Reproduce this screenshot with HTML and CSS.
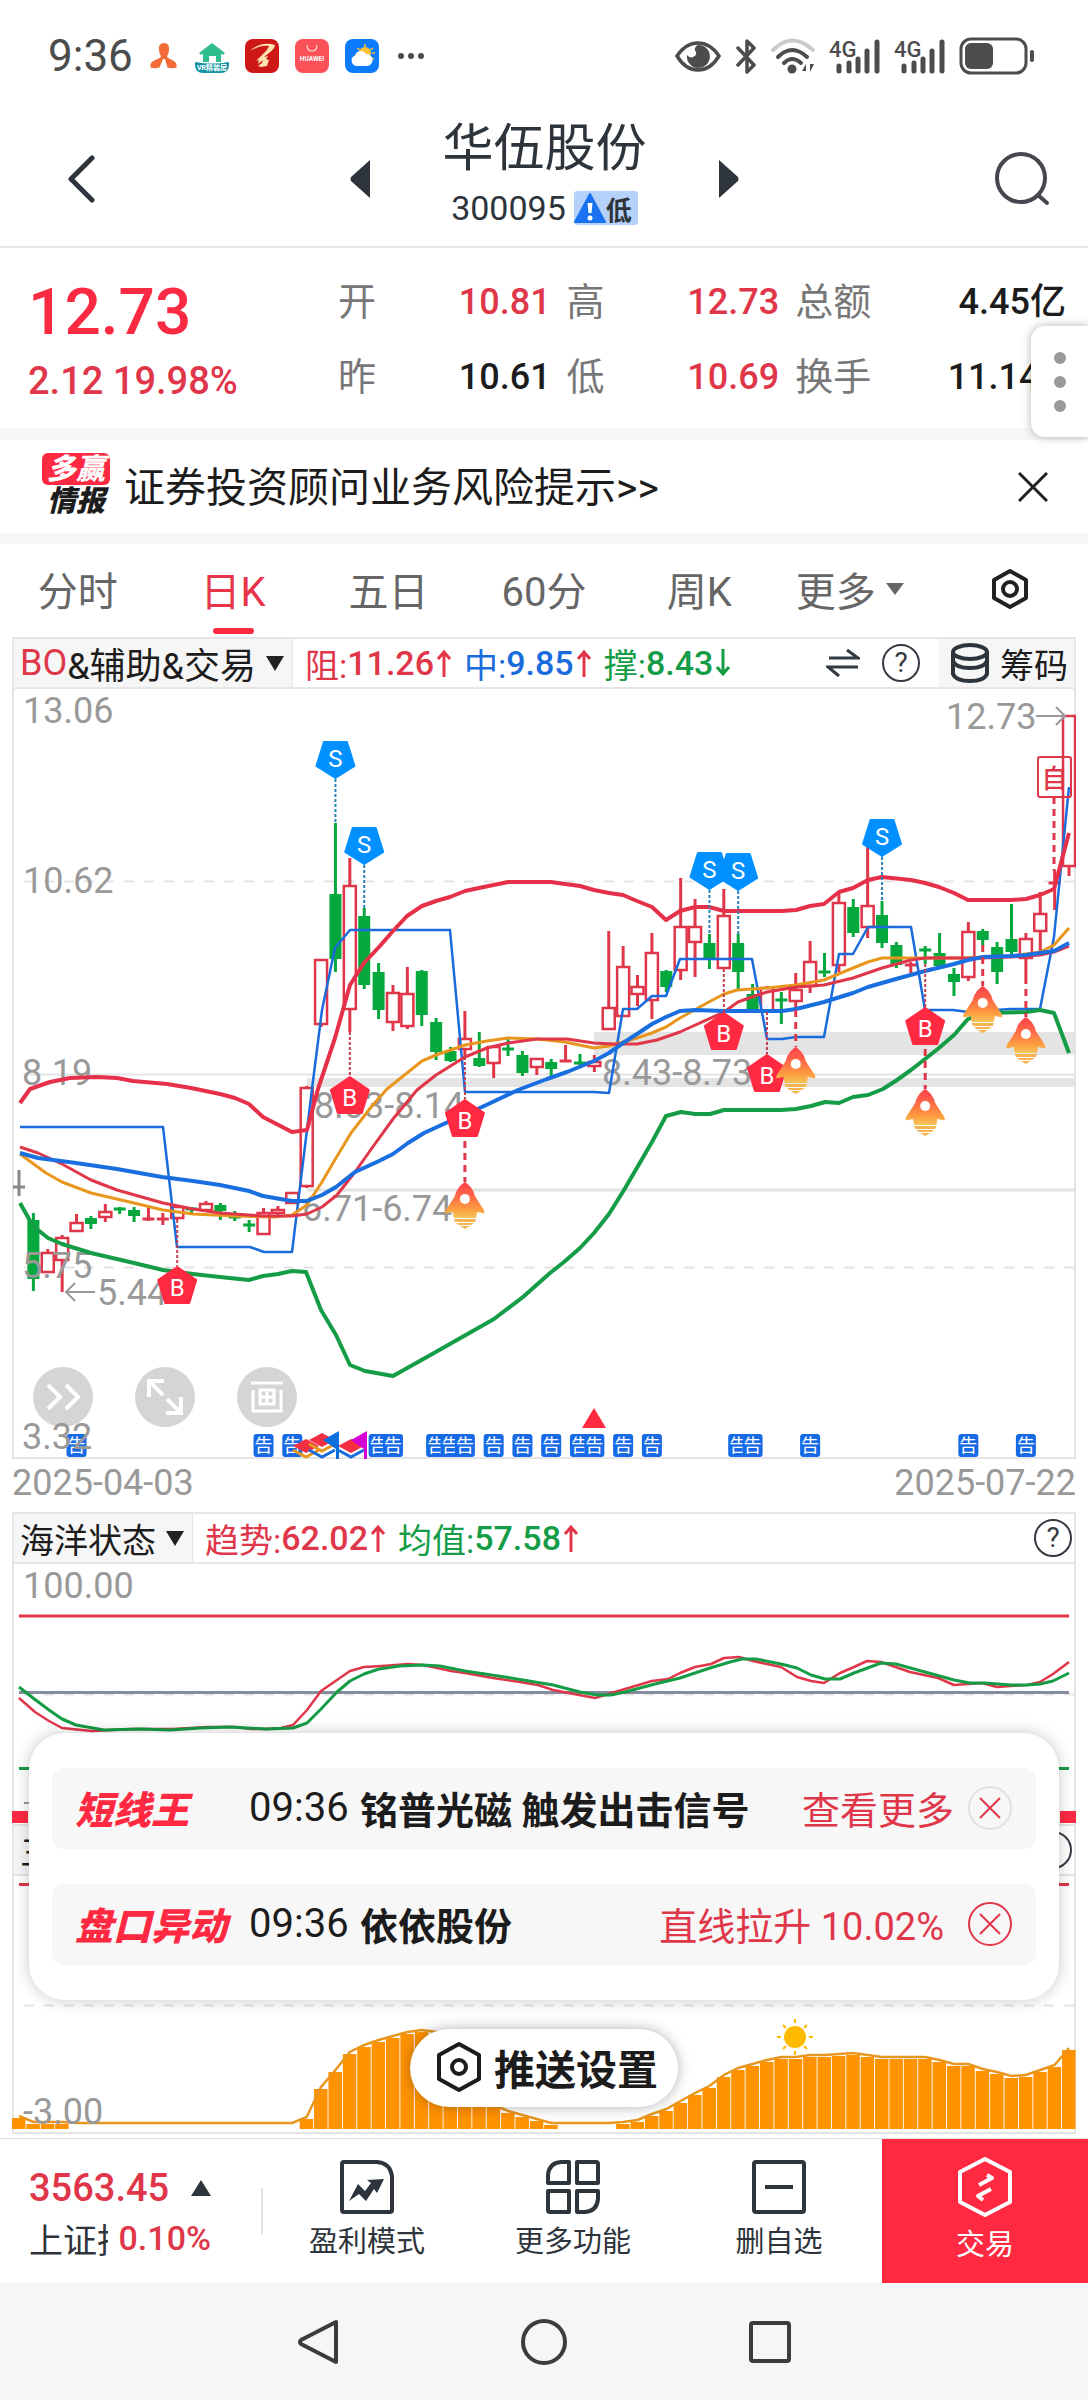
FILE: index.html
```html
<!DOCTYPE html>
<html lang="zh-CN">

<head>
    <meta charset="UTF-8">
    <meta name="viewport" content="width=device-width, initial-scale=1.0">
    <title>华伍股份 300095</title>
    <link rel="stylesheet" href="styles.css">
</head>

<body>
    <!-- phone status bar -->
    <div class="status-bar">
        <div class="status-left">
            <span class="clock">9:36</span>
            <svg width="30" height="34" viewBox="0 0 30 34">
                <path fill="#f26a35" d="M15 4c4 0 5.500 3 5 6.500c0 3-1 4.500-2 7c1 3 8 3 9.500 8v3c-3 1-6 1-9 0L16 20h-2l-3.500 8.500c-3 1-6 1-9 0v-3C3 20.500 11 20.500 12 17.500c-1-2.500-2-4-2-7C9.500 7 11 4 15 4z" />
            </svg>
            <svg width="34" height="34" viewBox="0 0 34 34">
                <path fill="#2ebd8e" d="M17 4L30 14l-2 2-2-1.500V23h-5v-6h-7v6H8v-8.500L6 16l-2-2z" />
                <path fill="#1593a5" d="M0 23q17 3 34 0v4q-1 7-8 7H8q-7 0-8-7z" />
                <text x="17" y="31" text-anchor="middle" font-size="7" font-weight="700" fill="#fff">VR精装房</text>
            </svg>
            <svg width="34" height="34" viewBox="0 0 34 34">
                <rect width="34" height="34" rx="8" fill="#cd1815" />
                <path fill="#ffe3b0" d="M5 12C12 5 22 3 30 6c0 4-6 8-11 12l4-1-2 3 3 1-2 6-6 1-3-1 4-3 1-3-5 4 1-4-3 1 7-7c3-3 5-5 6-8-6-1-12 1-19 5z" />
            </svg>
            <svg width="34" height="34" viewBox="0 0 34 34">
                <rect width="34" height="34" rx="8" fill="#fb5159" />
                <path d="M12 6q0 6 5 6t5-6" fill="none" stroke="#ffd9da" stroke-width="1.200" />
                <text x="17" y="22" text-anchor="middle" font-size="6.500" font-weight="700" fill="#fff">HUAWEI</text>
            </svg>
            <svg width="34" height="34" viewBox="0 0 34 34">
                <rect width="34" height="34" rx="8" fill="#0b7bff" />
                <g stroke="#ffc83a" stroke-width="1.500">
                    <path d="M20 5v3M12 9l3 2M28 9l-3 2M27 14h3M26 19l3 1" />
                </g>
                <circle cx="20" cy="14" r="6" fill="#ffc530" />
                <path fill="#fff" d="M11 27a5.500 5.500 0 0 1-1-10.500a6 6 0 0 1 11-1.500a6 6 0 1 1 1 12z" />
            </svg>
            <svg width="30" height="34" viewBox="0 0 30 34" fill="#4c4c4c">
                <circle cx="6" cy="17" r="3" /><circle cx="16" cy="17" r="3" /><circle cx="26" cy="17" r="3" />
            </svg>
        </div>
        <div class="status-right">
            <svg width="48" height="34" viewBox="0 0 48 34">
                <path d="M3 17C9 8 16 4 24 4s15 4 21 13C39 27 32 31 24 31S9 27 3 17z" fill="none" stroke="#4c4c4c" stroke-width="3.500" />
                <path d="M24 6a11.500 11.500 0 1 1-11 10q3 4 7 1.500t1-6Q20 8 24 6z" fill="#4c4c4c" />
            </svg>
            <svg width="22" height="36" viewBox="0 0 22 36" fill="none" stroke="#4c4c4c" stroke-width="3.500" stroke-linecap="round" stroke-linejoin="round">
                <path d="M3 10l16 17-7 7V3l7 7L3 27" />
            </svg>
            <svg width="46" height="36" viewBox="0 0 46 36" fill="none" stroke="#4c4c4c" stroke-width="4" stroke-linecap="round">
                <path d="M3 12Q22-7 43 12" stroke="#cbcbcb" />
                <path d="M8 19Q22 5 37 19M14 25Q22 17 31 25" />
                <circle cx="22" cy="31" r="4.500" fill="#4c4c4c" stroke="none" />
                <path d="M36 26v7h-4zM40 26h4l-4 8z" fill="#4c4c4c" stroke="none" />
            </svg>
            <svg width="52" height="36" viewBox="0 0 52 36">
                <text x="0" y="19" font-size="22" font-weight="500" fill="#4c4c4c">4G</text>
                <path d="M10 28v5M20 25v8M29 21v12M38 13v20M48 4v29" stroke="#4c4c4c" stroke-width="5" stroke-linecap="round" />
            </svg>
            <svg width="52" height="36" viewBox="0 0 52 36">
                <text x="0" y="19" font-size="22" font-weight="500" fill="#4c4c4c">4G</text>
                <path d="M10 28v5M20 25v8M29 21v12M38 13v20M48 4v29" stroke="#4c4c4c" stroke-width="5" stroke-linecap="round" />
            </svg>
            <svg width="75" height="38" viewBox="0 0 75 38">
                <rect x="2" y="2" width="65" height="34" rx="10" fill="none" stroke="#4c4c4c" stroke-width="3" />
                <rect x="6" y="6" width="28" height="26" rx="6" fill="#4c4c4c" />
                <rect x="71" y="13" width="4" height="12" rx="2" fill="#4c4c4c" />
            </svg>
        </div>
    </div>

    <header class="stock-header">
        <button type="button" class="icon-btn" aria-label="返回">
            <svg width="27" height="50" viewBox="0 0 27 50">
                <path d="M24 4L3 25l21 21" fill="none" stroke="#2e343b" stroke-width="5" stroke-linecap="round" stroke-linejoin="round" />
            </svg>
        </button>
        <div class="stock-switch">
            <button type="button" class="icon-btn" aria-label="上一只">
                <svg width="20" height="38" viewBox="0 0 20 38"><path d="M20 0v38L1 21q-1-2 0-4z" fill="#2e343b" /></svg>
            </button>
            <div class="stock-name">
                <h1>华伍股份</h1>
                <p>300095
                    <span class="risk">
                        <svg width="32" height="32" viewBox="0 0 32 32">
                            <path d="M16 2L31 30H1z" fill="#1b72f0" stroke="#1b72f0" stroke-width="2" stroke-linejoin="round" />
                            <path d="M13.500 11h5l-1 10h-3z" fill="#fff" /><circle cx="16" cy="26" r="2.500" fill="#fff" />
                        </svg>低</span>
                </p>
            </div>
            <button type="button" class="icon-btn" aria-label="下一只">
                <svg width="20" height="38" viewBox="0 0 20 38"><path d="M0 0v38l19-17q1-2 0-4z" fill="#2e343b" /></svg>
            </button>
        </div>
        <button type="button" class="icon-btn" aria-label="搜索">
            <svg width="56" height="56" viewBox="0 0 56 56" fill="none" stroke="#46464f" stroke-width="4" stroke-linecap="round">
                <circle cx="27" cy="27" r="24" /><path d="M44 44l9 8" />
            </svg>
        </button>
    </header>

    <section class="quote">
        <div class="price">
            <strong>12.73</strong>
            <span>2.12 19.98%</span>
        </div>
        <dl class="q1">
            <div><dt>开</dt><dd class="up">10.81</dd></div>
            <div><dt>昨</dt><dd>10.61</dd></div>
        </dl>
        <dl class="q2">
            <div><dt>高</dt><dd class="up">12.73</dd></div>
            <div><dt>低</dt><dd class="up">10.69</dd></div>
        </dl>
        <dl class="q3">
            <div><dt>总额</dt><dd>4.45亿</dd></div>
            <div><dt>换手</dt><dd>11.14%</dd></div>
        </dl>
        <button type="button" class="side-handle" aria-label="更多操作"><i></i><i></i><i></i></button>
    </section>

    <section class="banner">
        <span class="banner-logo"><b>多赢</b><em>情报</em></span>
        <a href="#">证券投资顾问业务风险提示&gt;&gt;</a>
        <button type="button" class="icon-btn" aria-label="关闭">
            <svg width="30" height="30" viewBox="0 0 30 30"><path d="M1 1l28 28M29 1L1 29" stroke="#222" stroke-width="3" /></svg>
        </button>
    </section>

    <nav class="tabs">
        <button type="button">分时</button>
        <button type="button" class="active">日K</button>
        <button type="button">五日</button>
        <button type="button">60分</button>
        <button type="button">周K</button>
        <button type="button" class="more">更多<svg width="18" height="12" viewBox="0 0 18 12"><path d="M0 0h18l-9 12z" fill="#666" /></svg></button>
        <button type="button" aria-label="设置">
            <svg width="38" height="42" viewBox="0 0 38 42" fill="none" stroke="#222" stroke-width="4" stroke-linejoin="round">
                <path d="M19 3l16 9v18l-16 9-16-9V12z" /><circle cx="19" cy="21" r="7" />
            </svg>
        </button>
    </nav>

    <main class="charts">
        <!-- main K line panel -->
        <div class="ind-bar">
            <button type="button" class="ind-name main-ind"><span class="up">BO</span>&amp;辅助&amp;交易<svg width="18" height="15" viewBox="0 0 18 15"><path d="M0 0h18l-9 15z" fill="#222" /></svg></button>
            <span class="val up">阻:<b>11.26</b><svg class="arrow" viewBox="0 0 16 28"><path d="M8 28V3M2 10l6-7 6 7" /></svg></span>
            <span class="val blue">中:<b>9.85</b><svg class="arrow up" viewBox="0 0 16 28"><path d="M8 28V3M2 10l6-7 6 7" /></svg></span>
            <span class="val down">撑:<b>8.43</b><svg class="arrow" viewBox="0 0 16 28"><path d="M8 0v25M2 18l6 7 6-7" /></svg></span>
            <span class="ind-tools">
                <svg width="34" height="30" viewBox="0 0 34 30" fill="none" stroke="#333a42" stroke-width="3"><path d="M3 10h29L21 2M32 19H2l11 9" /></svg>
                <button type="button" class="help" aria-label="说明">?</button>
            </span>
            <button type="button" class="chips">
                <svg width="40" height="40" viewBox="0 0 40 40" fill="none" stroke="#2e343b" stroke-width="4">
                    <ellipse cx="20" cy="9" rx="17" ry="7" /><path d="M3 9v22q3 7 17 7t17-7V9M3 18q3 7 17 7t17-7" />
                </svg>筹码
            </button>
        </div>
        <div class="kline">
            <svg class="plot" id="kline" viewBox="12 689 1064 770">
                <defs>
                    <linearGradient id="fire" x1="0" y1="0" x2="0" y2="1">
                        <stop offset="0" stop-color="#fd3f4b" /><stop offset=".4" stop-color="#fd6a47" /><stop offset=".75" stop-color="#fd9c40" /><stop offset="1" stop-color="#f5c55a" />
                    </linearGradient>
                    <g id="rocket">
                        <path d="M0 0C6 4 9 9 10 14L19 28q2 4-2 3l-5-1q0 3-1 6h-22q-1-3-1-6l-5 1q-4 1-2-3L-10 14C-9 9-6 4 0 0z" fill="url(#fire)" />
                        <path d="M-11 37h22l-1 3H-10zM-9 41H9L6 43H-6zM-5 44H5L0 47z" fill="#f6b350" />
                        <circle cy="17" r="5" fill="#fff" />
                    </g>
                    <path id="mark-s" d="M-11.500 1h23l7.500 24L0 37-19 25z" fill="#0090ff" stroke="#0090ff" stroke-width="2" stroke-linejoin="round" />
                    <path id="mark-b" d="M0 1l19 13-7 23h-24l-7-23z" fill="#ff2942" stroke="#ff2942" stroke-width="2" stroke-linejoin="round" />
                </defs>
                <path class="frame" d="M13 689V1458H1075V689" />
                <path class="band" d="M594 1032h482v23H594zM307 1078h769v9H307z" />
                <path class="grid dash" d="M24 881.500H1076M24 1267.500H1076" />
                <path class="grid" d="M24 1074.500H1076" />
                <path class="zone" d="M307 1190H1076" />
                <g id="candles"></g>
                <g class="label">
                    <text x="23" y="723">13.06</text><text x="23" y="893">10.62</text>
                    <text x="22" y="1085">8.19</text><text x="22" y="1278">5.75</text>
                    <text x="314" y="1118">8.03-8.14</text><text x="302" y="1221">6.71-6.74</text>
                    <text x="602" y="1085">8.43-8.73</text><text x="97" y="1305">5.44</text>
                    <text x="946" y="729">12.73</text>
                    <path d="M95 1292H66M75 1283l-9 9 9 9M1036 716h29M1056 707l9 9-9 9" />
                </g>
                <g class="line" id="curves"></g>
                <g id="marks"></g>
                <g class="label"><text x="22" y="1449">3.32</text></g>
                <g class="self-pick">
                    <path class="dash-r" d="M1054 797V870" />
                    <rect x="1038" y="757" width="33" height="40" rx="2" />
                    <text x="1054.500" y="788">自</text>
                </g>
            </svg>
            <div class="chart-tools">
                <button type="button" aria-label="展开"><svg width="34" height="26" viewBox="0 0 34 26"><path d="M2 1l12 12L2 25M20 1l12 12-12 12" /></svg></button>
                <button type="button" aria-label="全屏"><svg width="36" height="36" viewBox="0 0 36 36"><path d="M2 18V2h15M3 3l13 13M34 18v16H19M33 33L20 20" /></svg></button>
                <button type="button" class="draw" aria-label="画线"><svg width="34" height="34" viewBox="0 0 34 34"><path d="M1 3h32M3 10v21h28V10M10 10h14v14H10zM17 10v14M10 17h14" /></svg></button>
            </div>
        </div>
        <div class="dates"><time>2025-04-03</time><time>2025-07-22</time></div>

        <!-- trend panel -->
        <div class="ind-bar">
            <button type="button" class="ind-name">海洋状态<svg width="18" height="15" viewBox="0 0 18 15"><path d="M0 0h18l-9 15z" fill="#222" /></svg></button>
            <span class="val up">趋势:<b>62.02</b><svg class="arrow" viewBox="0 0 16 28"><path d="M8 28V3M2 10l6-7 6 7" /></svg></span>
            <span class="val down">均值:<b>57.58</b><svg class="arrow up" viewBox="0 0 16 28"><path d="M8 28V3M2 10l6-7 6 7" /></svg></span>
            <span class="ind-tools last"><button type="button" class="help" aria-label="说明">?</button></span>
        </div>
        <svg class="plot" viewBox="12 1564 1064 260">
            <path class="frame" d="M13 1564V1824M1075 1564V1824" />
            <g class="label"><text x="23" y="1598">100.00</text><path d="M24 1803h20" /></g>
            <path class="grid dash" d="M24 1694.500H1076" />
            <path d="M19 1616H1069" stroke="#e0364a" stroke-width="3" />
            <path d="M19 1692.500H1069" stroke="#868ca0" stroke-width="3" />
            <path d="M19 1768.500H1069" stroke="#149c46" stroke-width="3" />
            <path d="M12 1811h16v12H12zM1060 1811h16v12h-16z" fill="#ff2942" />
            <g class="line" id="trend"></g>
        </svg>

        <!-- energy panel -->
        <div class="ind-bar">
            <button type="button" class="ind-name">三</button>
            <span class="ind-tools last"><button type="button" class="help" aria-label="说明">?</button></span>
        </div>
        <svg class="plot" id="energy" viewBox="12 1876 1064 258">
            <path class="frame" d="M13 1876V2133H1075V1876" />
            <path class="grid dash" d="M24 2005.500H1076" />
            <path d="M19 1884.500H1069" stroke="#e0364a" stroke-width="3" />
            <g id="bars"></g>
            <g stroke="#ffb900" stroke-width="2">
                <circle cx="795" cy="2037" r="11" fill="#ffb900" stroke="none" />
                <path d="M795 2019v4M795 2051v4M777 2037h4M809 2037h4M783 2025l3 3M804 2046l3 3M807 2025l-3 3M786 2046l-3 3" />
            </g>
            <g class="label"><text x="23" y="2124">-3.00</text></g>
        </svg>

        <!-- push messages over the charts -->
        <div class="push-box">
            <div class="push-item">
                <span class="tag">短线王</span><time>09:36</time><strong>铭普光磁 触发出击信号</strong>
                <a href="#">查看更多</a>
                <button type="button" class="close pale" aria-label="关闭"><svg width="22" height="22" viewBox="0 0 22 22"><path d="M1 1l20 20M21 1L1 21" /></svg></button>
            </div>
            <div class="push-item">
                <span class="tag">盘口异动</span><time>09:36</time><strong>依依股份</strong>
                <a href="#">直线拉升 10.02%</a>
                <button type="button" class="close" aria-label="关闭"><svg width="22" height="22" viewBox="0 0 22 22"><path d="M1 1l20 20M21 1L1 21" /></svg></button>
            </div>
        </div>
        <button type="button" class="push-set">
            <svg width="46" height="52" viewBox="0 0 46 52" fill="none" stroke="#1c1c1c" stroke-width="4" stroke-linejoin="round">
                <path d="M23 3l20 11v24L23 49 3 38V14z" /><circle cx="23" cy="26" r="7" />
            </svg>推送设置
        </button>
    </main>

    <footer class="action-bar">
        <div class="index-box">
            <div class="index-row"><b>3563.45</b><svg width="20" height="16" viewBox="0 0 20 16"><path d="M10 0l10 16H0z" fill="#2e343b" /></svg></div>
            <div class="index-row"><span class="index-name">上证指数</span><span class="rate up">0.10%</span></div>
        </div>
        <button type="button" class="action">
            <svg width="54" height="54" viewBox="0 0 54 54" fill="none" stroke="#2e343b" stroke-width="4">
                <path d="M4 2h33q13 1 15 14v34q0 2-2 2H4q-2 0-2-2V4q0-2 2-2z" />
                <path d="M9 41l9-17 7 7 6-8-4-3 17-1-7 14-3-4-8 12-7-7z" fill="#2e343b" stroke="none" />
            </svg>盈利模式
        </button>
        <button type="button" class="action">
            <svg width="54" height="54" viewBox="0 0 54 54" fill="none" stroke="#2e343b" stroke-width="4" stroke-linejoin="round">
                <path d="M23 2v21H2V15Q3 3 15 2zM31 2h19q2 0 2 2v19H31zM2 31h21v21H4q-2 0-2-2zM31 31h21v8q-1 12-13 13h-8z" />
            </svg>更多功能
        </button>
        <button type="button" class="action">
            <svg width="54" height="54" viewBox="0 0 54 54" fill="none" stroke="#2e343b" stroke-width="4">
                <rect x="2" y="2" width="50" height="50" rx="2" /><path d="M13 27h28" />
            </svg>删自选
        </button>
        <button type="button" class="action trade">
            <svg width="54" height="60" viewBox="0 0 54 60" fill="none" stroke="#fff" stroke-width="4" stroke-linejoin="round">
                <path d="M27 2l25 13v30L27 58 2 45V15z" />
                <path d="M21 28l13-7-5-3M33 32l-13 7 5 4" />
            </svg>交易
        </button>
    </footer>

    <nav class="sys-nav">
        <button type="button" class="icon-btn" aria-label="返回"><svg width="42" height="46" viewBox="0 0 42 46"><path d="M39 3v40L4 25q-2-2 0-4z" /></svg></button>
        <button type="button" class="icon-btn" aria-label="主页"><svg width="46" height="46" viewBox="0 0 46 46"><circle cx="23" cy="23" r="21" /></svg></button>
        <button type="button" class="icon-btn" aria-label="最近任务"><svg width="42" height="42" viewBox="0 0 42 42"><rect x="2" y="2" width="38" height="38" rx="2" /></svg></button>
    </nav>

    <script src="chart.js"></script>
</body>

</html>
```
FILE: styles.css
```css
* {
    box-sizing: border-box;
}

body {
    margin: 0;
    background-color: #fff;
    color: #1c1c1c;
    font-family: Roboto, "Noto Sans CJK SC", sans-serif;
    font-size: 34px;
}

button {
    margin: 0;
    padding: 0;
    border: 0;
    background: none;
    color: inherit;
    font: inherit;
    cursor: pointer;
}

svg {
    display: block;
    flex: none;
}

h1,
p,
dl,
dd {
    margin: 0;
}

a {
    color: inherit;
    text-decoration: none;
}

.up {
    color: #e0364a;
}

.down {
    color: #149c46;
}

.blue {
    color: #1a6bdc;
}

/* status bar */
.status-bar {
    display: flex;
    align-items: center;
    justify-content: space-between;
    height: 112px;
    padding: 0 54px 0 48px;
    color: #4c4c4c;
}

.status-left,
.status-right {
    display: flex;
    align-items: center;
    gap: 16px;
}

.status-right {
    gap: 13px;
}

.clock {
    font-size: 44px;
}

/* header */
.stock-header {
    display: flex;
    align-items: center;
    justify-content: space-between;
    height: 136px;
    padding: 0 38px 0 68px;
    border-bottom: 2px solid #e6e6e6;
}

.stock-switch {
    display: flex;
    align-items: center;
    justify-content: space-between;
    width: 389px;
}

.stock-name {
    padding-bottom: 8px;
    text-align: center;
    color: #2e343b;
}

.stock-name h1 {
    font-size: 51px;
    font-weight: 400;
    line-height: 66px;
}

.stock-name p {
    display: flex;
    justify-content: center;
    align-items: center;
    gap: 8px;
    height: 52px;
}

.risk {
    display: flex;
    align-items: center;
    height: 34px;
    padding-right: 6px;
    border-radius: 3px;
    background-color: #b5d2fa;
    font-size: 26px;
    font-weight: 700;
}

/* quote */
.quote {
    position: relative;
    display: flex;
    gap: 16px;
    height: 180px;
    padding: 17px 22px 0 28px;
}

.price {
    flex: none;
    width: 294px;
    color: #e0364a;
}

.price strong {
    display: block;
    color: #fa2a42;
    font-size: 64px;
    font-weight: 500;
    line-height: 96px;
}

.price span {
    font-size: 38px;
    line-height: 40px;
    font-weight: 500;
}

.quote dl {
    font-size: 38px;
    line-height: 75px;
}

.quote dl div {
    display: flex;
    justify-content: space-between;
}

.quote dt {
    color: #777;
}

.quote dd {
    font-size: 36px;
    font-weight: 500;
}

.q1,
.q2 {
    flex: 212;
}

.q3 {
    flex: 270;
}

.side-handle {
    position: absolute;
    top: 78px;
    right: 0;
    display: flex;
    flex-direction: column;
    align-items: center;
    justify-content: center;
    gap: 12px;
    width: 57px;
    height: 111px;
    border-radius: 14px 0 0 14px;
    background-color: #fff;
    box-shadow: 0 0 10px rgba(0, 0, 0, .3);
}

.side-handle i {
    width: 12px;
    height: 12px;
    border-radius: 50%;
    background-color: #999;
}

/* banner */
.banner {
    display: flex;
    align-items: center;
    height: 116px;
    padding: 0 40px 0 42px;
    border-top: 12px solid #f6f6f6;
    border-bottom: 11px solid #f6f6f6;
    font-size: 41px;
}

.banner a {
    flex: 1;
    padding: 0 0 6px 14px;
}

.banner-logo {
    width: 68px;
    padding-bottom: 4px;
    font-size: 29px;
    font-style: italic;
    font-weight: 900;
    line-height: 32px;
    text-align: center;
}

.banner-logo b,
.banner-logo em {
    display: block;
    font-weight: 900;
}

.banner-logo b {
    border-radius: 6px;
    background-color: #ff2942;
    color: #fff;
}

/* tabs */
.tabs {
    display: grid;
    grid-template-columns: repeat(7, 1fr);
    height: 93px;
    color: #666;
    font-size: 40px;
}

.tabs button {
    position: relative;
    display: flex;
    align-items: center;
    justify-content: center;
    gap: 10px;
    padding-bottom: 3px;
}

.tabs .more {
    padding-right: 10px;
}

.tabs .active {
    color: #e8354a;
}

.tabs .active::after {
    content: "";
    position: absolute;
    bottom: 3px;
    width: 41px;
    height: 6px;
    border-radius: 3px;
    background-color: #ff2942;
}

/* charts */
.charts {
    position: relative;
    padding: 0 12px 4px;
}

.ind-bar {
    display: flex;
    align-items: center;
    height: 52px;
    border: 2px solid #e6e6e6;
}

.ind-name {
    display: flex;
    align-items: center;
    height: 100%;
    margin-right: 12px;
    padding: 0 8px 0 6px;
    border-right: 1px solid #e6e6e6;
    background-color: #f6f6f6;
}

.main-ind {
    font-size: 36px;
}

.ind-name svg {
    margin-left: 10px;
}

.val {
    display: flex;
    align-items: center;
    margin-right: 12px;
}

.val b {
    font-weight: 500;
}

.arrow {
    width: 16px;
    height: 28px;
    margin-left: 2px;
    fill: none;
    stroke: currentColor;
    stroke-width: 3;
}

.ind-tools {
    display: flex;
    align-items: center;
    gap: 22px;
    margin-left: auto;
    margin-right: 18px;
}

.ind-tools.last {
    margin-right: 2px;
}

.help {
    width: 38px;
    height: 38px;
    border: 2px solid #333a42;
    border-radius: 50%;
    color: #333a42;
    font-size: 28px;
    line-height: 34px;
}

.chips {
    display: flex;
    align-items: center;
    gap: 10px;
    height: 100%;
    padding: 0 6px 0 12px;
    background-color: #f6f6f6;
}

.kline {
    position: relative;
}

.plot {
    width: 100%;
    height: auto;
}

.frame {
    fill: none;
    stroke: #e4e4e4;
    stroke-width: 2;
}

.band {
    fill: #e4e4e4;
}

.grid {
    fill: none;
    stroke: #e4e4e4;
    stroke-width: 2;
}

.dash {
    stroke-dasharray: 10 10;
}

.zone {
    stroke: #e2e2e2;
    stroke-width: 3;
}

.label text {
    fill: #999;
    font-size: 36px;
}

.label path {
    fill: none;
    stroke: #999;
    stroke-width: 2;
}

.line path {
    fill: none;
    stroke-linejoin: round;
}

.mark-text {
    fill: #fff;
    font-size: 24px;
    text-anchor: middle;
}

.dots-s {
    stroke: #2b82b8;
    stroke-width: 2;
    stroke-dasharray: 3 2;
}

.dots-b {
    stroke: #c43c52;
    stroke-width: 2;
    stroke-dasharray: 3 2;
}

.dash-r {
    stroke: #e0364a;
    stroke-width: 3;
    stroke-dasharray: 7 5;
}

.notice {
    fill: #fff;
    font-size: 18px;
    text-anchor: middle;
}

.self-pick rect {
    fill: none;
    stroke: #e0364a;
    stroke-width: 2;
}

.self-pick text {
    fill: #e0364a;
    font-size: 26px;
    font-weight: 500;
    text-anchor: middle;
}

.chart-tools {
    position: absolute;
    left: 21px;
    bottom: 32px;
    display: flex;
    gap: 42px;
}

.chart-tools button {
    display: flex;
    align-items: center;
    justify-content: center;
    width: 60px;
    height: 60px;
    border-radius: 50%;
    background-color: rgba(150, 150, 150, .4);
}

.chart-tools svg {
    fill: none;
    stroke: #fff;
    stroke-width: 4;
}

.chart-tools .draw svg {
    stroke-width: 3;
}

.dates {
    display: flex;
    align-items: center;
    justify-content: space-between;
    height: 53px;
    padding-bottom: 6px;
    color: #999;
    font-size: 36px;
}

/* push messages */
.push-box {
    position: absolute;
    left: 29px;
    right: 29px;
    bottom: 138px;
    display: grid;
    gap: 35px;
    padding: 35px 23px;
    border-radius: 36px;
    background-color: #fff;
    box-shadow: 0 0 16px rgba(0, 0, 0, .22);
}

.push-item {
    display: flex;
    align-items: center;
    height: 81px;
    padding: 0 24px 2px 23px;
    border-radius: 12px;
    background-color: #f7f7f7;
    font-size: 38px;
}

.push-item .tag {
    width: 174px;
    color: #ff2942;
    font-style: italic;
    font-weight: 900;
}

.push-item time {
    width: 111px;
    font-size: 40px;
}

.push-item strong {
    flex: 1;
    font-weight: 700;
}

.push-item a {
    color: #e0364a;
}

.close {
    display: flex;
    align-items: center;
    justify-content: center;
    width: 44px;
    height: 44px;
    margin-left: 24px;
    border: 2px solid #e0364a;
    border-radius: 50%;
}

.close.pale {
    margin-left: 14px;
    border-color: #e0e0e0;
}

.close svg {
    stroke: #e0364a;
    stroke-width: 2;
}

.push-set {
    position: absolute;
    left: 50%;
    bottom: 31px;
    display: flex;
    align-items: center;
    gap: 12px;
    height: 78px;
    padding: 0 20px 2px 26px;
    border-radius: 39px;
    background-color: #fff;
    box-shadow: 0 0 14px rgba(0, 0, 0, .3);
    font-size: 41px;
    font-weight: 700;
    white-space: nowrap;
    transform: translateX(-50%);
}

/* bottom bar */
.action-bar {
    display: flex;
    height: 145px;
    border-top: 1px solid #e0e0e0;
}

.index-box {
    position: relative;
    flex: none;
    width: 264px;
    padding: 24px 53px 0 29px;
}

.index-box::after {
    content: "";
    position: absolute;
    top: 49px;
    right: 1px;
    width: 2px;
    height: 46px;
    background-color: #e2e2e2;
}

.index-row {
    display: flex;
    align-items: center;
    justify-content: space-between;
    height: 50px;
}

.index-row b {
    color: #e0364a;
    font-size: 38px;
    font-weight: 500;
}

.index-name {
    width: 79px;
    overflow: hidden;
    color: #2e343b;
    white-space: nowrap;
}

.rate {
    font-weight: 500;
}

.action {
    display: flex;
    flex: 1;
    flex-direction: column;
    align-items: center;
    justify-content: center;
    gap: 8px;
    color: #2e343b;
    font-size: 29px;
    line-height: 40px;
}

.action.trade {
    background-color: #ff2942;
    color: #fff;
}

.sys-nav {
    display: flex;
    align-items: center;
    justify-content: center;
    gap: 182px;
    height: 117px;
    background-color: #f6f6f6;
}

.sys-nav svg {
    fill: none;
    stroke: #3c3c3c;
    stroke-width: 4;
    stroke-linejoin: round;
}
```
FILE: chart.js
```javascript
const RED = '#e0364a';
const GREEN = '#05a83c';
const BLUE = '#1a6bdc';
const ORANGE = '#e8961e';

// x of the candle number i
function px(i) {
    return 19 + i * 14.384;
}

// [color, high, top, bottom, low]
const candles = [
    ['x', 1170, 1187, 1187, 1196], ['g', 1213, 1220, 1279, 1291], ['r', 1249, 1252, 1273, 1273], ['r', 1235, 1237, 1261, 1292],
    ['r', 1214, 1222, 1232, 1232], ['g', 1216, 1218, 1224, 1229], ['r', 1204, 1211, 1218, 1222], ['g', 1207, 1209, 1209, 1214],
    ['g', 1207, 1210, 1216, 1222], ['r', 1208, 1219, 1219, 1221], ['r', 1213, 1219, 1219, 1225], ['r', 1205, 1206, 1219, 1220],
    ['g', 1207, 1209, 1209, 1215], ['r', 1201, 1203, 1211, 1211], ['g', 1203, 1205, 1211, 1220], ['g', 1211, 1217, 1217, 1221],
    ['g', 1220, 1225, 1225, 1232], ['r', 1208, 1212, 1235, 1235], ['r', 1206, 1209, 1214, 1215], ['r', 1192, 1192, 1204, 1204],
    ['r', 1086, 1087, 1187, 1188], ['r', 959, 959, 1025, 1027], ['g', 823, 894, 959, 972], ['r', 858, 885, 1010, 1032],
    ['g', 908, 916, 985, 989], ['g', 963, 972, 1010, 1019], ['r', 985, 992, 1023, 1031], ['r', 967, 993, 1027, 1029],
    ['g', 970, 971, 1015, 1026], ['g', 1018, 1022, 1052, 1060], ['g', 1047, 1051, 1061, 1062], ['r', 1011, 1038, 1050, 1057],
    ['g', 1032, 1058, 1066, 1067], ['r', 1046, 1046, 1064, 1078], ['g', 1038, 1049, 1049, 1056], ['g', 1051, 1055, 1073, 1076],
    ['r', 1058, 1058, 1068, 1075], ['g', 1059, 1062, 1069, 1076], ['r', 1045, 1061, 1061, 1062], ['g', 1054, 1063, 1063, 1066],
    ['r', 1055, 1061, 1067, 1072], ['r', 931, 1007, 1030, 1030], ['r', 946, 966, 1017, 1017], ['r', 975, 986, 995, 1006],
    ['r', 933, 952, 1001, 1019], ['g', 970, 971, 987, 992], ['r', 878, 926, 971, 980], ['r', 899, 926, 943, 977],
    ['g', 934, 943, 959, 969], ['r', 889, 915, 969, 969], ['g', 934, 943, 972, 989], ['g', 984, 994, 1010, 1013],
    ['r', 986, 987, 1012, 1012], ['g', 992, 1000, 1000, 1024], ['r', 973, 989, 1002, 1010], ['r', 941, 961, 987, 993],
    ['g', 953, 972, 972, 977], ['r', 893, 902, 966, 972], ['g', 899, 907, 933, 937], ['r', 847, 905, 928, 938],
    ['g', 901, 915, 943, 948], ['g', 942, 945, 965, 968], ['r', 962, 965, 965, 973], ['g', 946, 950, 950, 964],
    ['g', 933, 953, 966, 966], ['g', 968, 974, 982, 996], ['r', 922, 931, 978, 981], ['g', 929, 931, 940, 945],
    ['g', 942, 947, 972, 984], ['g', 904, 939, 952, 955], ['r', 933, 938, 959, 977], ['r', 892, 913, 932, 952],
    ['r', 870, 883, 883, 910], ['r', 715, 715, 867, 876]
];

let html = '';
candles.forEach(function ([type, high, top, bottom, low], i) {
    const x = px(i);
    const color = type === 'g' ? GREEN : type === 'r' ? RED : '#888';
    html += `<path d="M${x} ${high}V${top}M${x} ${bottom}V${low}" stroke="${color}" stroke-width="3"/>`;
    if (top === bottom) {
        html += `<path d="M${x - 6} ${top}h12" stroke="${color}" stroke-width="3"/>`;
    } else if (type === 'g') {
        html += `<rect x="${x - 6}" y="${top}" width="12" height="${bottom - top}" fill="${color}"/>`;
    } else {
        html += `<rect x="${x - 6}" y="${top + 1}" width="12" height="${bottom - top - 2}" fill="#fff" stroke="${color}" stroke-width="2.500"/>`;
    }
});
document.getElementById('candles').innerHTML = html;

function curve(points, color, width) {
    return `<path d="M${points}" stroke="${color}" stroke-width="${width}"/>`;
}

// support / resistance lines and averages
document.getElementById('curves').innerHTML =
    // step line
    curve('20 1127 163 1127 177 1247 250 1247 264 1252 292 1252 312 1089 322 1010 335 948 350 930 450 930 465 1092 594 1092 609 1093 623 1009 637 1009 652 996 666 996 680 959 752 959 767 1039 782 1039 796 1037 824 1037 839 954 853 954 868 927 911 927 925 1010 953 1010 968 1012 1010 1009 1040 1009 1054 937 1069 787', BLUE, 2.5) +
    // orange average
    curve('20 1154 46 1173 62 1182 91 1193 134 1203 163 1210 193 1214 235 1216 275 1217 292 1215 307 1205 322 1182 336 1158 351 1133 372 1106 387 1089 422 1061 436 1055 465 1045 487 1041 508 1038 537 1039 565 1042 594 1048 609 1046 637 1038 652 1033 666 1027 680 1018 707 1003 724 994 737 990 767 988 796 985 824 980 853 968 868 962 882 958 925 958 968 958 1011 956 1040 952 1054 945 1069 928', ORANGE, 3) +
    // red average
    curve('20 1147 38 1153 62 1164 91 1180 117 1190 163 1203 193 1209 220 1213 263 1216 292 1216 307 1214 322 1207 337 1195 355 1172 372 1148 393 1119 417 1090 436 1075 465 1057 487 1048 508 1043 537 1039 567 1039 594 1043 613 1044 637 1044 657 1040 680 1032 724 1012 738 1002 752 997 767 992 796 987 824 985 853 978 882 968 911 960 925 958 983 958 1011 957 1040 955 1054 952 1069 946', RED, 3) +
    // blue average
    curve('20 1153 38 1158 76 1163 117 1169 162 1177 193 1181 220 1185 249 1191 263 1196 292 1201 307 1201 322 1195 336 1187 355 1172 379 1161 393 1154 408 1143 424 1133 448 1122 482 1107 518 1090 547 1079 567 1072 594 1061 609 1053 623 1043 637 1034 652 1024 666 1017 680 1011 695 1010 724 1011 782 1011 796 1009 824 1002 853 993 868 987 896 979 925 971 954 964 968 960 983 957 1011 956 1026 955 1040 953 1054 951 1069 943', '#1a6fe0', 4) +
    // upper band
    curve('20 1103 30 1089 50 1082 70 1078 97 1077 117 1078 133 1081 167 1084 191 1088 220 1094 235 1098 249 1104 263 1117 292 1132 307 1130 318 1089 335 1038 350 985 364 963 379 947 393 931 407 916 422 906 436 901 450 897 465 891 479 888 508 882 551 882 565 884 580 886 594 890 609 893 623 895 637 901 652 907 666 920 680 911 695 907 709 907 724 911 782 911 796 910 810 906 824 904 839 892 853 888 868 880 882 877 911 880 925 883 939 887 954 893 968 900 1011 900 1026 899 1040 895 1054 889 1069 833', '#e6304a', 4) +
    // lower band
    curve('20 1203 33 1226 48 1238 62 1244 91 1253 134 1263 163 1270 193 1274 220 1277 249 1280 263 1276 278 1274 292 1271 306 1272 321 1310 336 1335 350 1365 365 1371 393 1376 434 1353 494 1319 523 1297 550 1273 564 1262 580 1248 594 1233 609 1214 624 1190 638 1166 652 1142 666 1116 681 1112 695 1114 710 1114 724 1110 781 1110 796 1109 811 1106 825 1102 839 1103 853 1097 868 1095 883 1089 897 1080 911 1070 925 1059 939 1048 954 1035 968 1019 983 1013 1026 1012 1040 1010 1054 1013 1069 1053', '#149c46', 4);

// buy / sell points: [candle, y of the marker, y of the candle end]
const sells = [[22, 741, 822], [24, 827, 908], [48, 852, 934], [50, 853, 934], [60, 819, 901]];
const buys = [[11, 1266, 1220], [23, 1076, 1032], [31, 1099, 1057], [49, 1012, 969], [52, 1054, 1012], [63, 1007, 964]];
const rockets = [[31, 1182, 1141], [54, 1047, 1010], [63, 1089, 1049], [67, 986, 945], [70, 1017, 977]];
const notices = [4, 17, 19, 25, 26, 29, 30, 31, 33, 35, 37, 39, 40, 42, 44, 50, 51, 55, 66, 70];

let marks = '';
sells.forEach(function ([i, y, end]) {
    const x = px(i);
    marks += `<path class="dots-s" d="M${x} ${y + 38}V${end}"/><use href="#mark-s" x="${x}" y="${y}"/><text class="mark-text" x="${x}" y="${y + 26}">S</text>`;
});
buys.forEach(function ([i, y, end]) {
    const x = px(i);
    marks += `<path class="dots-b" d="M${x} ${end}V${y}"/><use href="#mark-b" x="${x}" y="${y}"/><text class="mark-text" x="${x}" y="${y + 30}">B</text>`;
});
rockets.forEach(function ([i, y, end]) {
    const x = px(i);
    marks += `<path class="dash-r" d="M${x} ${end}V${y}"/><use href="#rocket" x="${x}" y="${y}"/>`;
});
notices.forEach(function (i) {
    const x = px(i);
    marks += `<rect x="${x - 10}" y="1434" width="20" height="23" rx="3" fill="#176ae6"/><text class="notice" x="${x}" y="1452">告</text>`;
});

// layered diamonds, flags and the red triangle
[[306, ORANGE, 1446], [322, ORANGE, 1440], [351, BLUE, 1446]].forEach(function ([x, color, y]) {
    marks += `<path d="M${x - 13} ${y + 4}l13 7 13-7" fill="none" stroke="${color}" stroke-width="3"/><path d="M${x - 13} ${y}l13-7 13 7-13 7z" fill="#f52f42"/>`;
});
marks += '<path d="M309 1450l13 7 13-7" fill="none" stroke="#1a6bdc" stroke-width="3"/>';
marks += '<path d="M339 1431v28h-3v-10l-13-9z" fill="#0b6fe0"/><path d="M367 1431v28h-3v-10l-13-9z" fill="#d400d4"/>';
marks += '<path d="M594 1408l12 20h-24z" fill="#ff2942"/>';
document.getElementById('marks').innerHTML = marks;

// trend panel
document.getElementById('trend').innerHTML =
    curve('19 1698 35 1712 49 1721 62 1728 92 1731 132 1729 173 1729 208 1727 236 1727 251 1729 267 1729 281 1728 293 1725 307 1710 321 1691 337 1680 350 1671 364 1667 382 1666 408 1664 423 1665 451 1671 465 1673 493 1678 520 1682 538 1685 553 1690 595 1698 625 1689 652 1681 668 1679 680 1673 695 1667 711 1664 724 1658 739 1657 753 1661 767 1664 781 1667 797 1677 811 1681 824 1683 840 1673 854 1667 867 1661 881 1662 910 1672 938 1678 954 1685 982 1683 997 1687 1027 1685 1040 1682 1053 1674 1069 1662', RED, 2.5) +
    curve('19 1687 33 1698 49 1710 62 1719 76 1725 104 1730 140 1729 170 1730 200 1728 230 1727 267 1729 293 1728 307 1723 321 1709 337 1692 350 1681 364 1674 379 1669 400 1666 423 1665 440 1666 465 1671 505 1677 553 1685 580 1692 597 1695 611 1695 625 1692 655 1684 680 1678 710 1668 730 1662 742 1659 756 1659 781 1664 797 1668 811 1675 825 1679 840 1679 854 1673 881 1663 896 1664 925 1672 954 1680 970 1683 985 1683 1011 1685 1027 1685 1040 1684 1053 1681 1069 1673', '#149c46', 3);

// energy panel, 0 = no bar
const energy = [2118, 2124, 2124, 2124, 0, 0, 0, 0, 0, 0, 0, 0, 0, 0, 0, 0, 0, 0, 0, 0,
    2119, 2089, 2072, 2054, 2047, 2042, 2038, 2034, 2032, 2034, 2050, 2085, 2100, 2107, 2113, 2117, 2121, 2125,
    0, 0, 0, 0, 2124, 2122, 2116, 2111, 2103, 2095, 2088, 2077, 2070, 2066, 2062, 2059, 2059, 2057, 2057, 2056, 2055,
    2057, 2059, 2059, 2059, 2059, 2062, 2066, 2066, 2071, 2074, 2078, 2077, 2072, 2067, 2050];

let bars = '';
let topLine = [];
energy.forEach(function (y, i) {
    if (y) {
        bars += `<rect x="${12 + i * 14.384}" y="${y}" width="13.500" height="${2129 - y}" fill="#ff9200"/>`;
    }
    topLine.push(px(i) + ' ' + (y ? Math.min(y - 2, 2123) : 2123));
});
bars += `<path d="M${topLine.join(' ')}" fill="none" stroke="${ORANGE}" stroke-width="2.500"/>`;
document.getElementById('bars').innerHTML = bars;
```
